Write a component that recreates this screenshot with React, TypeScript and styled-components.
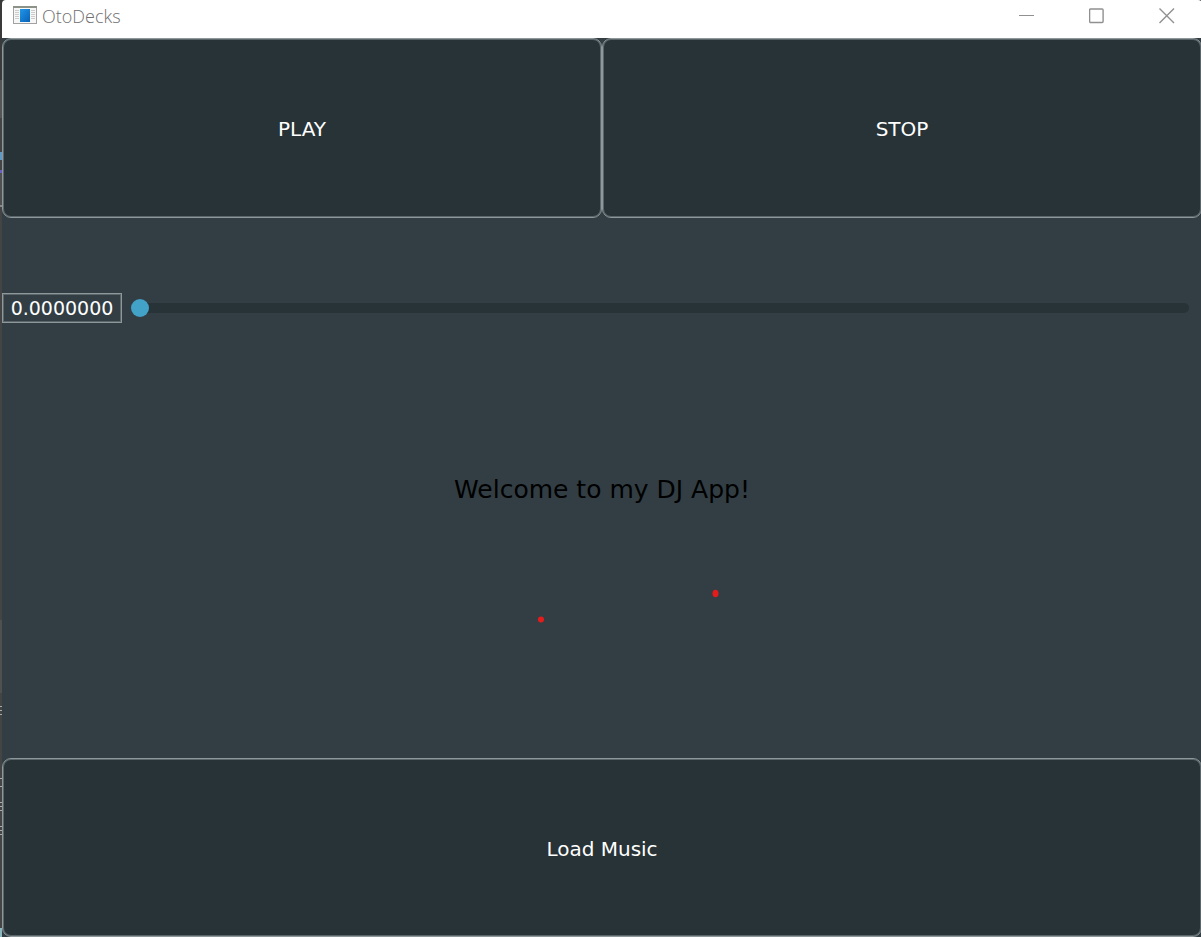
import React, { useState } from "react";
import styled, { createGlobalStyle } from "styled-components";

const GlobalStyle = createGlobalStyle`
  *, *::before, *::after { box-sizing: border-box; }
  body {
    margin: 0;
    overflow-x: hidden;
    font-family: "DejaVu Sans", Verdana, sans-serif;
    /* sliver of the desktop left visible beside the window */
    background: linear-gradient(
      #3a3a3a 80px, #555 80px, #555 118px, #444 118px, #444 152px,
      #5f9ac4 152px, #5f9ac4 160px, #444 160px, #444 170px,
      #6a5fc0 170px, #6a5fc0 173px, #505050 173px, #505050 205px,
      #888 205px, #888 207px, #444 207px, #444 620px,
      #505050 620px, #505050 693px, #444 693px, #444 706px,
      #aaa 706px, #aaa 707px, #444 707px, #444 710px, #aaa 710px, #aaa 711px,
      #444 711px, #444 714px, #aaa 714px, #aaa 715px, #444 715px, #444 778px,
      #aaa 778px, #aaa 779px, #444 779px, #444 786px, #aaa 786px, #aaa 787px,
      #444 787px, #444 802px, #aaa 802px, #aaa 803px, #444 803px, #444 806px,
      #aaa 806px, #aaa 807px, #444 807px, #444 810px, #aaa 810px, #aaa 811px,
      #444 811px, #444 826px, #aaa 826px, #aaa 827px, #444 827px, #444 830px,
      #aaa 830px, #aaa 831px, #444 831px, #444 834px, #aaa 834px, #aaa 835px,
      #444 835px, #444 928px, #8ab8bc 928px
    );
  }
`;

const Window = styled.div`
  display: flex;
  flex-direction: column;
  min-height: 100vh;
  margin: 0 -1px 0 2px;
  overflow: hidden;
  border-radius: 4px 4px 0 0;
  background: #323e44;
`;

const TitleBar = styled.header`
  display: flex;
  align-items: flex-start;
  justify-content: space-between;
  height: 38px;
  background: #fff;
`;

const Title = styled.h1`
  display: flex;
  align-items: center;
  gap: 5px;
  margin: 0;
  padding: 4px 0 0 11px;
  font: 300 18px/24px "Open Sans", "Segoe UI", sans-serif;
  color: #707070;

  svg {
    margin-bottom: 2px;
  }
`;

const WindowControls = styled.div`
  display: flex;
`;

const WindowButton = styled.button`
  display: grid;
  place-items: center;
  width: 70px;
  height: 32px;
  padding: 0;
  border: 0;
  background: none;
  color: #909090;
`;

const Deck = styled.main`
  flex: 1;
  display: grid;
  grid-template-rows: repeat(4, minmax(80px, 180fr)) minmax(80px, 179fr);
`;

const ButtonRow = styled.div`
  display: grid;
  grid-auto-flow: column;
  grid-auto-columns: 1fr;
`;

const DeckButton = styled.button`
  padding: 2px 0 0;
  border: 1px solid #8e989b;
  border-radius: 9px;
  box-shadow: inset 0 0 0 1px #5a666a;
  background: #283338;
  color: #fff;
  font: 20px/24px "DejaVu Sans", Verdana, sans-serif;
`;

const SliderRow = styled.div`
  display: flex;
  align-items: center;
  gap: 9px;
  padding-right: 13px;
`;

const SliderValue = styled.input`
  width: 120px;
  height: 30px;
  padding: 0;
  border: 1px solid #8e989b;
  border-radius: 0;
  box-shadow: inset 0 0 0 1px #5a666a;
  background: transparent;
  color: #fff;
  font: 19px/24px "DejaVu Sans", Verdana, sans-serif;
  text-align: center;
`;

const Slider = styled.input`
  appearance: none;
  flex: 1;
  min-width: 0;
  height: 18px;
  margin: 0;
  background: none;

  &::-webkit-slider-runnable-track {
    height: 10px;
    border-radius: 5px;
    background: #283338;
  }

  &::-webkit-slider-thumb {
    appearance: none;
    width: 18px;
    height: 18px;
    margin-top: -4px;
    border-radius: 50%;
    background: #42a2c8;
  }
`;

const Welcome = styled.p`
  align-self: center;
  margin: 0;
  padding-top: 4px;
  color: #000;
  font-size: 25px;
  line-height: 30px;
  text-align: center;
`;

const Sparks = styled.svg`
  justify-self: center;
  align-self: start;
`;

const AppIcon = () => (
  <svg width="24" height="18" viewBox="0 0 24 18" aria-hidden="true">
    <defs>
      <linearGradient id="page" x2="1" y2="1">
        <stop stopColor="#2196e8" />
        <stop offset="1" stopColor="#0862b8" />
      </linearGradient>
    </defs>
    <rect x=".5" y=".5" width="23" height="17" fill="#f7f7f7" stroke="#a2a2a2" />
    <path d="M0 1h24" stroke="#8c9288" strokeWidth="2" />
    <path
      d="M2 4.5h4M2 6.5h4M2 8.5h4M2 10.5h4M2 12.5h4M18 4.5h4M18 6.5h4M18 8.5h4M18 10.5h4M18 12.5h4"
      stroke="#ccc"
    />
    <rect x="7" y="3" width="10" height="13" fill="url(#page)" />
  </svg>
);

export default function App() {
  const [position, setPosition] = useState(0);

  return (
    <>
      <GlobalStyle />
      <Window>
        <TitleBar>
          <Title>
            <AppIcon />
            OtoDecks
          </Title>
          <WindowControls>
            <WindowButton aria-label="Minimize">
              <svg width="16" height="16" fill="none" stroke="currentColor">
                <path d="M0 7.5h15" />
              </svg>
            </WindowButton>
            <WindowButton aria-label="Maximize">
              <svg width="16" height="16" fill="none" stroke="currentColor">
                <rect x=".6" y="1" width="13.5" height="13.5" rx="1" strokeWidth="1.4" />
              </svg>
            </WindowButton>
            <WindowButton aria-label="Close">
              <svg width="16" height="16" fill="none" stroke="currentColor">
                <path d="M.5.5l14.5 14.5M15 .5L.5 15" strokeWidth="1.4" />
              </svg>
            </WindowButton>
          </WindowControls>
        </TitleBar>
        <Deck>
          <ButtonRow>
            <DeckButton>PLAY</DeckButton>
            <DeckButton>STOP</DeckButton>
          </ButtonRow>
          <SliderRow>
            <SliderValue aria-label="Value" readOnly value={position.toFixed(7)} />
            <Slider
              type="range"
              aria-label="Level"
              min="0"
              max="1"
              step="any"
              value={position}
              onChange={(e) => setPosition(Number(e.target.value))}
            />
          </SliderRow>
          <Welcome>Welcome to my DJ App!</Welcome>
          <Sparks width="240" height="60" viewBox="-120 0 240 60" fill="#e61c1c" aria-hidden="true">
            <circle cx="-61" cy="41.5" r="3" />
            <ellipse cx="113.5" cy="15.5" rx="3" ry="3.8" />
          </Sparks>
          <DeckButton>Load Music</DeckButton>
        </Deck>
      </Window>
    </>
  );
}
